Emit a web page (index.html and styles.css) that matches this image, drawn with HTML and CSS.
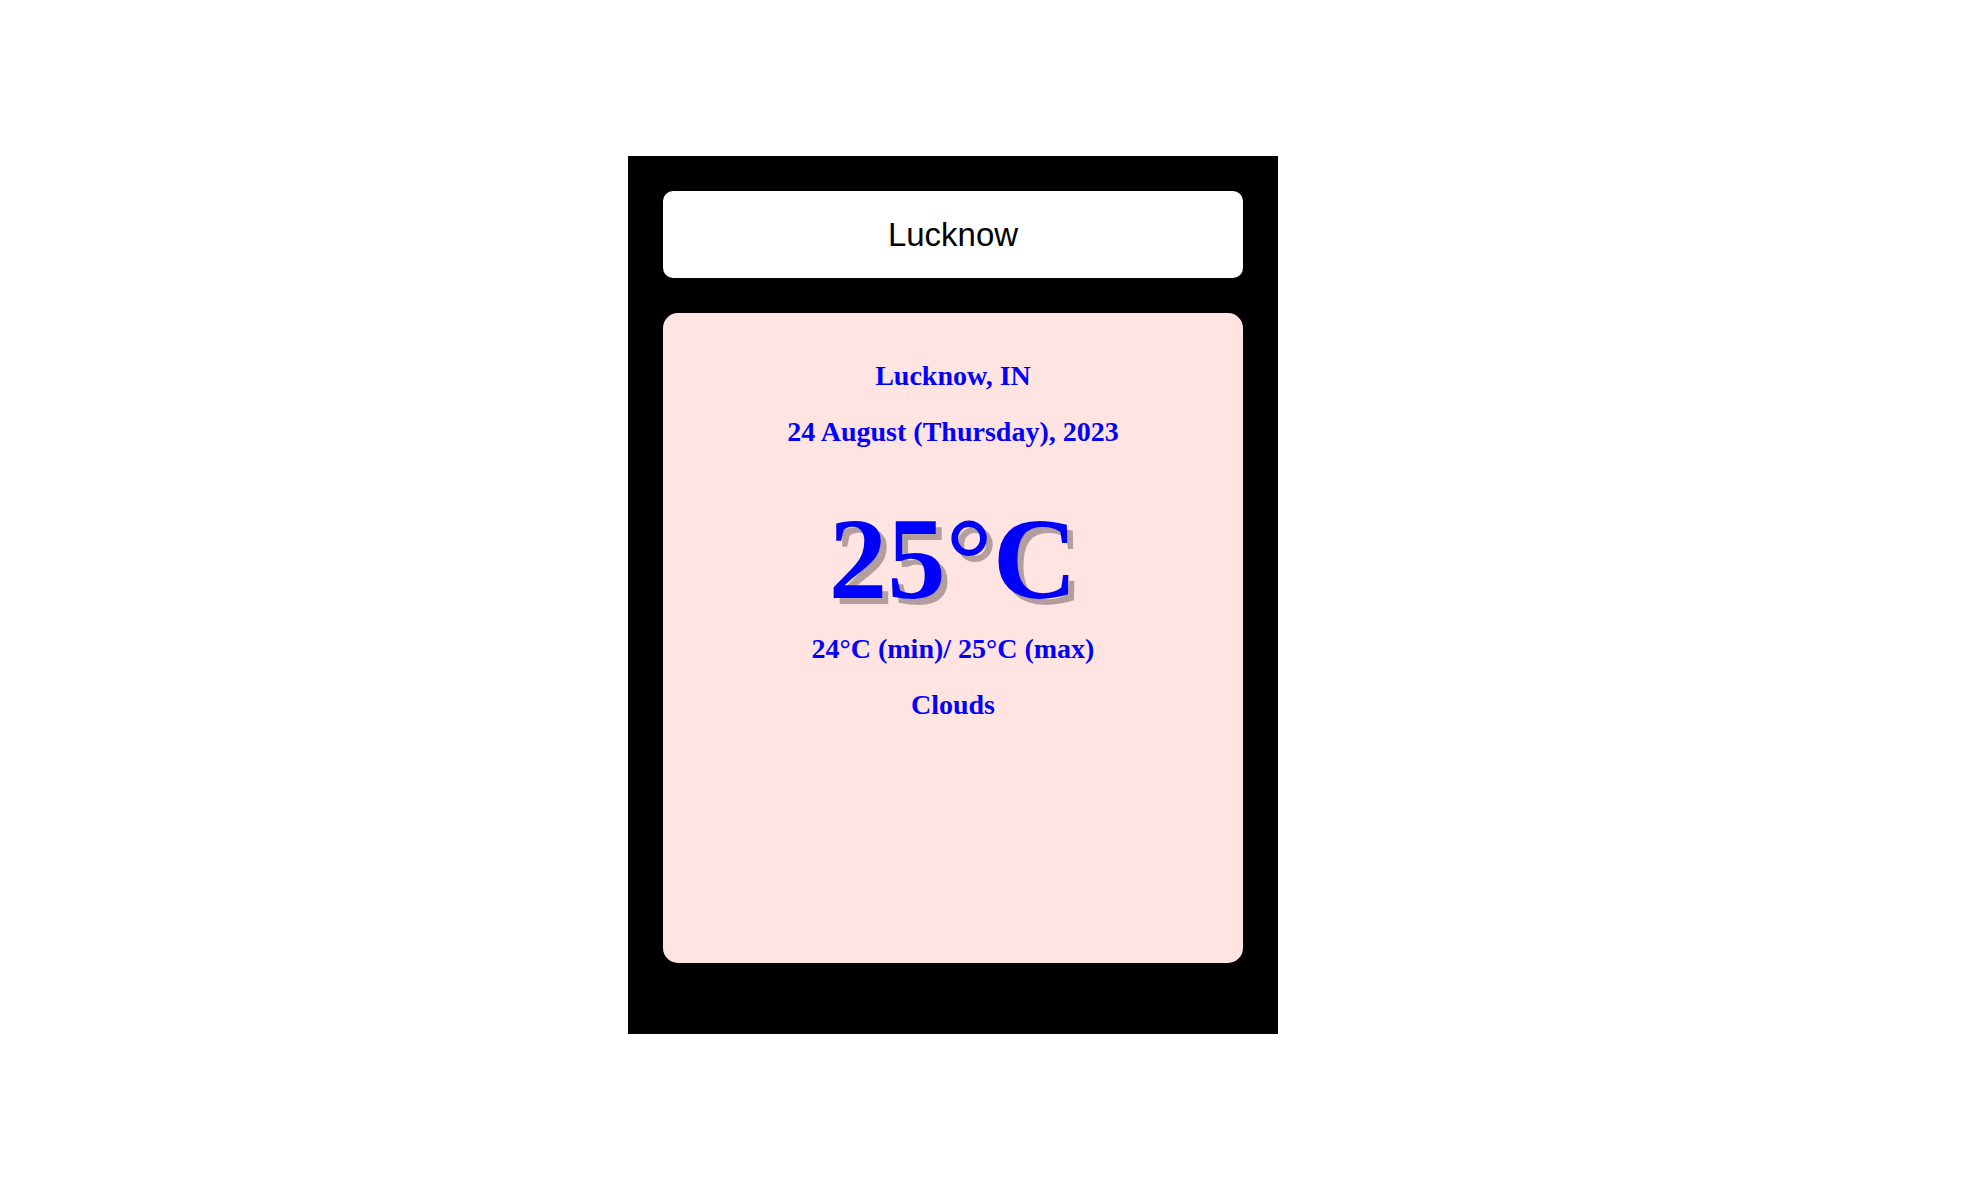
FILE: index.html
```html
<!DOCTYPE html>
<html>
<head>
<meta charset="utf-8">
<link rel="stylesheet" href="styles.css">
</head>
<body>
<div class="page">
  <div class="app">
    <input class="search" type="text" value="Lucknow">
    <div class="card">
      <div class="line city">Lucknow, IN</div>
      <div class="line date">24 August (Thursday), 2023</div>
      <div class="temp">25°C</div>
      <div class="line minmax">24°C (min)/ 25°C (max)</div>
      <div class="line weather">Clouds</div>
    </div>
  </div>
</div>
</body>
</html>
```
FILE: styles.css
```css
html, body {
  margin: 0;
  padding: 0;
  background: #ffffff;
}
.page {
  padding: 156px 0 0 628px;
}
.app {
  width: 580px;
  height: 808px;
  padding: 35px;
  background: #000000;
  display: flex;
  flex-direction: column;
  gap: 35px;
}
.search {
  box-sizing: border-box;
  width: 580px;
  height: 87px;
  border: none;
  outline: none;
  border-radius: 10px;
  background: #ffffff;
  text-align: center;
  font-family: "Liberation Sans", Arial, sans-serif;
  font-size: 33px;
  color: #000000;
  padding: 0;
  margin: 0;
}
.card {
  height: 650px;
  box-sizing: border-box;
  background: #ffe4e1;
  border-radius: 15px;
  padding-top: 47px;
  text-align: center;
  font-family: "Liberation Serif", "Times New Roman", serif;
  font-weight: bold;
  color: #0000ff;
}
.line {
  font-size: 28px;
  line-height: 32px;
}
.date {
  margin-top: 24px;
}
.temp {
  margin-top: 47px;
  font-size: 117px;
  line-height: 128px;
  text-shadow: 6px 6px 0 rgba(0, 0, 0, 0.3);
}
.minmax {
  margin-top: 10px;
}
.weather {
  margin-top: 24px;
}
```
